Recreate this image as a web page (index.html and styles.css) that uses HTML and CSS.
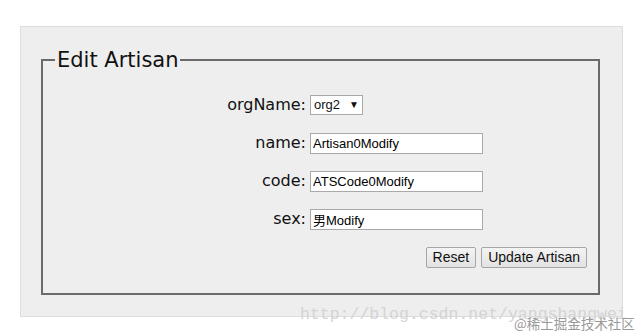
FILE: index.html
```html
<!DOCTYPE html>
<html>
<head>
    <title>Edit Artisan</title>
    <link rel="stylesheet" href="styles.css">
</head>
<body>
<div class="panel">
    <fieldset class="edit-box">
        <legend>Edit Artisan</legend>

        <div class="row">
            <label>orgName:</label>
            <div class="select-box">org2 <span class="arrow">&#9660;</span></div>
        </div>
        <div class="row">
            <label>name:</label>
            <input class="text-input" type="text" value="Artisan0Modify">
        </div>
        <div class="row">
            <label>code:</label>
            <input class="text-input" type="text" value="ATSCode0Modify">
        </div>
        <div class="row">
            <label>sex:</label>
            <input class="text-input" type="text" value="男Modify">
        </div>
        <div class="buttons">
            <button class="btn">Reset</button>
            <button class="btn">Update Artisan</button>
        </div>
    </fieldset>
</div>

<div class="watermark">http://blog.csdn.net/yangshangwei</div>
<div class="stamp">@稀土掘金技术社区</div>
</body>
</html>
```

FILE: styles.css
```css
body {
  margin: 0;
  background-color: #ffffff;
  font-family: "DejaVu Sans", sans-serif;
  color: #111111;
}

.panel {
  width: 559px;
  margin: 26px 0 0 20px;
  padding: 21px 22px 21px 20px;
  background-color: #eeeeee;
  border: 1px solid #dddddd;
}

.edit-box {
  margin: 0;
  padding: 14px 11px 17px 12px;
  border: 2px solid #6a6a6a;
}

.edit-box legend {
  font-size: 21px;
  padding: 0 1px 0 2px;
  color: #111111;
}

.row {
  display: grid;
  grid-template-columns: 251px auto;
  column-gap: 4px;
  align-items: center;
  height: 38px;
}

.row label {
  text-align: right;
  font-size: 16px;
  padding-bottom: 1px;
}

.select-box {
  width: 45px;
  height: 18px;
  padding: 0 3px;
  background-color: #ffffff;
  border: 1px solid #a9a9a9;
  font-family: "Liberation Sans", Arial, sans-serif;
  font-size: 13px;
  line-height: 18px;
  display: flex;
  justify-content: space-between;
}

.arrow {
  font-size: 10px;
}

.text-input {
  width: 167px;
  height: 19px;
  padding: 0 2px;
  margin: 0;
  border: 1px solid #a9a9a9;
  font-family: "Liberation Sans", Arial, "Noto Sans CJK SC", sans-serif;
  font-size: 13px;
  color: #000000;
}

.buttons {
  display: flex;
  justify-content: flex-end;
  align-items: center;
  gap: 5px;
  height: 38px;
}

.btn {
  height: 21px;
  padding: 0 6px;
  background: linear-gradient(#f4f4f4, #e2e2e2);
  border: 1px solid #a6a6a6;
  border-radius: 2px;
  font-family: "Liberation Sans", Arial, sans-serif;
  font-size: 14px;
  color: #111111;
}

.watermark {
  position: absolute;
  left: 300px;
  top: 305px;
  font-family: "Liberation Mono", monospace;
  font-size: 16.5px;
  color: #d4d4d4;
}

.stamp {
  position: absolute;
  left: 514px;
  top: 313px;
  font-family: "Noto Sans CJK SC", sans-serif;
  font-size: 13.5px;
  color: #9a9a9a;
}
```
